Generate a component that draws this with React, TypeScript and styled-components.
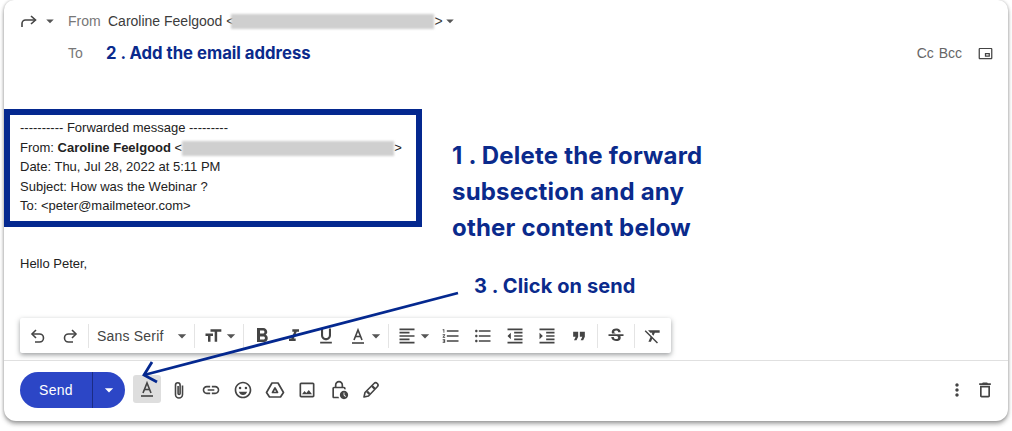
import React from 'react';
import styled, { createGlobalStyle } from 'styled-components';
import {
  MdArrowDropDown,
  MdFormatAlignLeft,
  MdFormatBold,
  MdFormatClear,
  MdFormatIndentDecrease,
  MdFormatIndentIncrease,
  MdFormatItalic,
  MdFormatListBulleted,
  MdFormatListNumbered,
  MdFormatQuote,
  MdFormatSize,
  MdFormatUnderlined,
  MdLink,
  MdMoreVert,
  MdOutlineDelete,
  MdOutlineEmojiEmotions,
  MdOutlineImage,
  MdOutlineLockClock,
  MdOutlinePictureInPictureAlt,
  MdStrikethroughS,
} from 'react-icons/md';

const GlobalStyle = createGlobalStyle`
  html, body {
    margin: 0;
    padding: 0;
    background: #ffffff;
  }
  body {
    font-family: "Liberation Sans", Arial, sans-serif;
  }
`;

const Page = styled.div`
  width: 1012px;
  height: 431px;
  padding: 0 4px 10px;
  box-sizing: border-box;
  overflow: hidden;
`;

const Card = styled.div`
  position: relative;
  height: 421px;
  background: #fff;
  border-radius: 10px 10px 12px 12px;
  box-shadow: 0 3px 4px rgba(60, 60, 60, 0.45), 0 0 3px rgba(0, 0, 0, 0.22);
  display: flex;
  flex-direction: column;
`;

const FromRow = styled.div`
  height: 42px;
  display: flex;
  align-items: center;
  padding-left: 16px;
  font-size: 14px;
  color: #444;
`;

const ReplyIcon = styled.svg`
  width: 18px;
  height: 18px;
  color: #444;
  flex: none;
`;

const Caret = styled(MdArrowDropDown)<{ $size?: number }>`
  font-size: ${(p) => p.$size ?? 20}px;
  color: #555;
  flex: none;
`;

const ReplyCaret = styled(Caret)`
  margin: 0 9px 0 3px;
`;

const FromCaret = styled(Caret)`
  margin-left: -2px;
`;

const FieldLabel = styled.span`
  color: #777;
  font-size: 14px;
  width: 40px;
`;

const FromName = styled.span`
  color: #3c3c3c;
`;

const Redacted = styled.span<{ $width: number; $shift?: number }>`
  display: inline-block;
  width: ${(p) => p.$width}px;
  height: 15px;
  margin-left: ${(p) => p.$shift ?? 0}px;
  background: #cfcfcf;
  filter: blur(1px);
  vertical-align: middle;
`;

const ToRow = styled.div`
  height: 22px;
  display: flex;
  align-items: center;
  padding-left: 64px;
  padding-right: 15px;
`;

const ToLabel = styled(FieldLabel)`
  width: 38px;
`;

const Callout = styled.div`
  font-family: Inter, "Open Sans", sans-serif;
  font-weight: 700;
  color: #0a2a8c;
`;

const SmallCallout = styled(Callout)`
  font-size: 16.7px;
`;

const CcBcc = styled.span`
  margin-left: auto;
  font-size: 14px;
  color: #666;
  word-spacing: 1px;
`;

const PopoutIcon = styled(MdOutlinePictureInPictureAlt)`
  font-size: 15px;
  color: #444;
  margin-left: 16px;
`;

const ForwardSection = styled.div`
  display: flex;
  margin-top: 45px;
  align-items: flex-start;
`;

const ForwardBox = styled.div`
  width: 418px;
  height: 118px;
  box-sizing: border-box;
  border: 6px solid #04288f;
  padding: 3px 0 0 10px;
  font-size: 13px;
  line-height: 19.5px;
  color: #222;
`;

const BigCallout = styled(Callout)`
  margin: 29px 0 0 30px;
  font-size: 24px;
  letter-spacing: 0.2px;
  line-height: 36px;
  white-space: nowrap;
`;

const Greeting = styled.div`
  margin: 8px 0 0 16px;
  font-size: 13px;
  line-height: 20px;
  color: #222;
`;

const SendCallout = styled(Callout)`
  position: absolute;
  left: 470px;
  top: 275px;
  font-size: 20px;
  letter-spacing: 0.1px;
  line-height: 22px;
`;

const FormatBar = styled.div`
  align-self: flex-start;
  margin: 44px 0 0 16px;
  height: 35px;
  box-sizing: border-box;
  width: 651px;
  background: #fff;
  box-shadow: 0 2px 5px rgba(60, 64, 67, 0.5);
  border-radius: 2px;
  padding-left: 2px;
  display: flex;
  align-items: center;
  color: #444;
`;

// $left / $right pad the slot so the glyph lands where it sits in the bar
const Tool = styled.span<{ $width?: number; $left?: number; $right?: number; $size?: number }>`
  width: ${(p) => p.$width ?? 32}px;
  height: 24px;
  box-sizing: border-box;
  padding-left: ${(p) => p.$left ?? 0}px;
  padding-right: ${(p) => p.$right ?? 0}px;
  flex: none;
  display: flex;
  align-items: center;
  justify-content: center;
  font-size: ${(p) => p.$size ?? 20}px;
  color: #444;
  svg {
    flex: none;
  }
`;

const Separator = styled.span<{ $before?: number }>`
  width: 1px;
  height: 24px;
  margin-left: ${(p) => p.$before ?? 0}px;
  background: #e4e4e4;
  flex: none;
`;

const FontName = styled.span`
  font-size: 14px;
  color: #444;
  width: 80px;
  padding-left: 8px;
  box-sizing: border-box;
  letter-spacing: 0.2px;
  white-space: nowrap;
`;

const Footer = styled.div`
  margin-top: 7px;
  border-top: 1px solid #e0e0e0;
  flex: 1;
  display: flex;
  align-items: center;
  padding: 0 9px 2px 16px;
`;

const SendButton = styled.div`
  width: 105px;
  height: 36px;
  border-radius: 18px;
  background: #2c46c6;
  color: #fff;
  display: flex;
  align-items: center;
  font-size: 14px;
  letter-spacing: 0.3px;
  margin-right: 8px;
`;

const SendLabel = styled.span`
  width: 72px;
  text-align: center;
`;

const SendMore = styled.span`
  flex: 1;
  height: 100%;
  display: flex;
  align-items: center;
  justify-content: center;
  border-left: 1px solid #1b2c85;
  font-size: 20px;
`;

const FormatToggle = styled.span`
  width: 28px;
  height: 28px;
  background: #dedede;
  border-radius: 3px;
  display: flex;
  align-items: center;
  justify-content: center;
  font-size: 18px;
  color: #444;
  margin: 0 1px 2px 0;
`;

const ActionIcon = styled.span<{ $push?: boolean; $width?: number }>`
  width: ${(p) => p.$width ?? 32}px;
  height: 28px;
  flex: none;
  display: flex;
  align-items: center;
  justify-content: center;
  font-size: 20px;
  color: #444;
  margin-left: ${(p) => (p.$push ? 'auto' : '0')};
`;

const ArrowOverlay = styled.svg`
  position: absolute;
  left: -4px;
  top: 0;
  width: 1012px;
  height: 431px;
  pointer-events: none;
`;

const LineIcon: React.FC<{ size?: number; width?: number; children: React.ReactNode }> = ({
  size = 20,
  width = 1.6,
  children,
}) => (
  <svg width={size} height={size} viewBox="0 0 20 20" fill="none" stroke="currentColor" strokeWidth={width}>
    {children}
  </svg>
);

const UndoIcon = () => (
  <LineIcon>
    <path d="M8 4L4 8l4 4" />
    <path d="M4 8h7.500a4 4 0 0 1 0 8H7" />
  </LineIcon>
);

const RedoIcon = () => (
  <LineIcon>
    <path d="M12 4l4 4-4 4" />
    <path d="M16 8H8.500a4 4 0 0 0 0 8H13" />
  </LineIcon>
);

const TextColorIcon = () => (
  <LineIcon>
    <path d="M6 14l4-10 4 10" />
    <path d="M7.300 10.500h5.400" />
    <path d="M4 17h12" />
  </LineIcon>
);

const ClipIcon = () => (
  <LineIcon>
    <path d="M13.500 5.500v9a3.500 3.500 0 0 1-7 0V5a2.300 2.300 0 0 1 4.600 0v8.500a1 1 0 0 1-2 0V6" />
  </LineIcon>
);

const DriveIcon = () => (
  <LineIcon width={1.7}>
    <path strokeLinejoin="round" d="M7 3h6l5.500 9.500-3 4.500H4.500l-3-4.500z" />
    <path strokeLinejoin="round" d="M10 8l2.500 4.500h-5z" />
  </LineIcon>
);

const PenIcon = () => (
  <LineIcon>
    <path strokeLinejoin="round" d="M3 17l1-4.500L13 3.500a2 2 0 0 1 3.300 3.300L7.500 16z" />
    <path d="M6 11.500l2.500 2.500M11 6l3 3" fill="currentColor" strokeWidth={2.4} />
  </LineIcon>
);

const App: React.FC = () => {
  return (
    <Page>
      <GlobalStyle />
      <Card>
        <FromRow>
          <ReplyIcon viewBox="0 0 18 18" fill="none" stroke="currentColor" strokeWidth="1.6">
            <path d="M2 15v-3.500A3.500 3.500 0 0 1 5.500 8H15" />
            <path d="M11 4l4.500 4L11 12" />
          </ReplyIcon>
          <ReplyCaret $size={18} />
          <FieldLabel>From</FieldLabel>
          <FromName>
            Caroline Feelgood &lt;<Redacted $width={203} $shift={-3} />&gt;
          </FromName>
          <FromCaret $size={18} />
        </FromRow>
        <ToRow>
          <ToLabel>To</ToLabel>
          <SmallCallout>2 . Add the email address</SmallCallout>
          <CcBcc>Cc Bcc</CcBcc>
          <PopoutIcon />
        </ToRow>
        <ForwardSection>
          <ForwardBox>
            <div>---------- Forwarded message ---------</div>
            <div>
              From: <strong>Caroline Feelgood</strong> &lt;<Redacted $width={212} />&gt;
            </div>
            <div>Date: Thu, Jul 28, 2022 at 5:11 PM</div>
            <div>Subject: How was the Webinar ?</div>
            <div>To: &lt;peter@mailmeteor.com&gt;</div>
          </ForwardBox>
          <BigCallout>
            1 . Delete the forward
            <br />
            subsection and any
            <br />
            other content below
          </BigCallout>
        </ForwardSection>
        <Greeting>Hello Peter,</Greeting>
        <SendCallout>3 . Click on send</SendCallout>
        <FormatBar>
          <Tool><UndoIcon /></Tool>
          <Tool><RedoIcon /></Tool>
          <Separator $before={2} />
          <FontName>Sans Serif</FontName>
          <Tool $width={25}><Caret /></Tool>
          <Separator />
          <Tool $width={28} $left={8}><MdFormatSize /></Tool>
          <Tool $width={20} $right={4}><Caret /></Tool>
          <Separator />
          <Tool $width={34} $left={2} $size={24}><MdFormatBold /></Tool>
          <Tool><MdFormatItalic /></Tool>
          <Tool><MdFormatUnderlined /></Tool>
          <Tool><TextColorIcon /></Tool>
          <Tool $width={14} $right={10}><Caret /></Tool>
          <Separator />
          <Tool $width={27} $left={9}><MdFormatAlignLeft /></Tool>
          <Tool $width={18}><Caret /></Tool>
          <Tool $width={33} $left={1}><MdFormatListNumbered /></Tool>
          <Tool><MdFormatListBulleted /></Tool>
          <Tool><MdFormatIndentDecrease /></Tool>
          <Tool><MdFormatIndentIncrease /></Tool>
          <Tool $width={34} $right={2}><MdFormatQuote /></Tool>
          <Separator />
          <Tool $width={36}><MdStrikethroughS /></Tool>
          <Separator />
          <Tool $width={36}><MdFormatClear /></Tool>
        </FormatBar>
        <Footer>
          <SendButton>
            <SendLabel>Send</SendLabel>
            <SendMore><MdArrowDropDown /></SendMore>
          </SendButton>
          <FormatToggle><TextColorIcon /></FormatToggle>
          <ActionIcon $width={33}><ClipIcon /></ActionIcon>
          <ActionIcon><MdLink /></ActionIcon>
          <ActionIcon><MdOutlineEmojiEmotions /></ActionIcon>
          <ActionIcon><DriveIcon /></ActionIcon>
          <ActionIcon><MdOutlineImage /></ActionIcon>
          <ActionIcon><MdOutlineLockClock /></ActionIcon>
          <ActionIcon><PenIcon /></ActionIcon>
          <ActionIcon $push $width={28}><MdMoreVert /></ActionIcon>
          <ActionIcon $width={28}><MdOutlineDelete /></ActionIcon>
        </Footer>
        <ArrowOverlay viewBox="0 0 1012 431" fill="none" stroke="#04288f" strokeWidth="2.8">
          <path d="M458 293L144 375" />
          <path d="M152 362L144 375L157 382" />
        </ArrowOverlay>
      </Card>
    </Page>
  );
};

export default App;
